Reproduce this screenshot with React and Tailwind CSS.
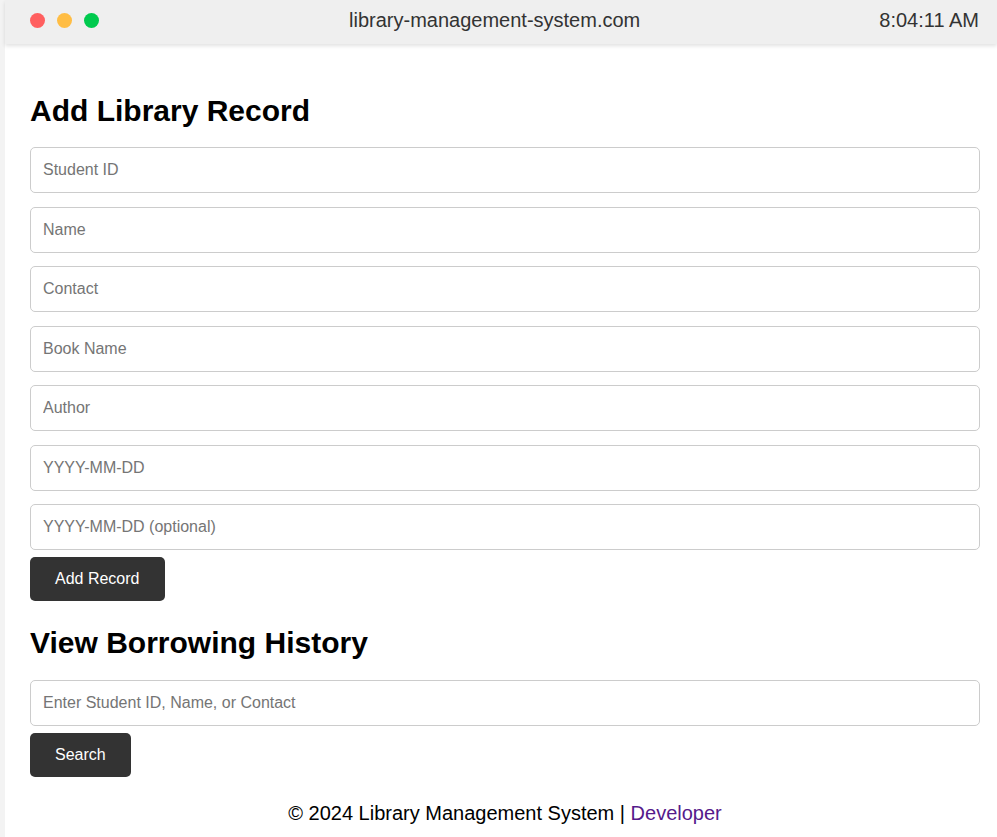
import React from "react";

/* ===========================================================
   LIBRARY MANAGEMENT PAGE
=========================================================== */
export default function App() {
  return (
    <div className="flex min-h-[837px] bg-[#f3f3f3] font-['Liberation_Sans',Arial,sans-serif]">
      {/* left strip */}
      <div className="w-[5px] shrink-0" />

      {/* ---------------------- WINDOW ---------------------- */}
      <div className="flex-1 bg-white">
        {/* top bar */}
        <div className="relative z-10 flex items-center h-[44px] pb-[4px] pl-[25px] pr-[18px] bg-[#efefef] shadow-[0_2px_4px_rgba(0,0,0,0.12)]">
          <div className="flex items-center gap-[12px]">
            <span className="w-[15px] h-[15px] rounded-full bg-[#ff5f5f]" />
            <span className="w-[15px] h-[15px] rounded-full bg-[#ffbd44]" />
            <span className="w-[15px] h-[15px] rounded-full bg-[#00ca4e]" />
          </div>
          <div className="flex-1 pl-[11px] text-center text-[20px] text-[#333]">
            library-management-system.com
          </div>
          <div className="text-[20px] text-[#333]">8:04:11 AM</div>
        </div>

        {/* content */}
        <div className="pt-[50px] pl-[25px] pr-[17px] pb-[20px]">
          <h2 className="text-[30px] font-bold leading-[34px] text-black mb-[19px]">
            Add Library Record
          </h2>

          <div className="flex flex-col gap-[13.5px]">
            <Field placeholder="Student ID" />
            <Field placeholder="Name" />
            <Field placeholder="Contact" />
            <Field placeholder="Book Name" />
            <Field placeholder="Author" />
            <Field placeholder="YYYY-MM-DD" />
            <Field placeholder="YYYY-MM-DD (optional)" />
          </div>

          <DarkButton className="mt-[7px]">Add Record</DarkButton>

          <h2 className="text-[30px] font-bold leading-[34px] text-black mt-[25px] mb-[20px]">
            View Borrowing History
          </h2>

          <Field placeholder="Enter Student ID, Name, or Contact" />
          <DarkButton className="mt-[7px]">Search</DarkButton>

          <p className="mt-[25px] text-center text-[20px] leading-[23px] text-black">
            © 2024 Library Management System |{" "}
            <a href="#" className="text-[#551a8b]">
              Developer
            </a>
          </p>
        </div>
      </div>
    </div>
  );
}

/* ===========================================================
   REUSABLE COMPONENTS
=========================================================== */

function Field({ placeholder }) {
  return (
    <input
      type="text"
      placeholder={placeholder}
      className="block w-full h-[46px] px-[12px] border border-[#cccccc] rounded-[5px] text-[16px] text-black placeholder:text-[#757575] outline-none"
    />
  );
}

function DarkButton({ children, className = "" }) {
  return (
    <button
      className={
        "block h-[44px] px-[25px] bg-[#333333] text-white text-[16px] rounded-[5px] " +
        className
      }
    >
      {children}
    </button>
  );
}
